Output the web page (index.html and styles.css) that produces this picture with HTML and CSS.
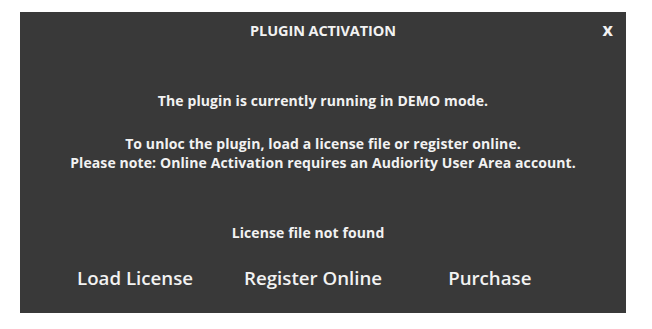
FILE: index.html
```html
<!DOCTYPE html>
<html lang="en">

<head>
    <meta charset="UTF-8">
    <meta name="viewport" content="width=device-width, initial-scale=1.0">
    <title>Plugin Activation</title>
    <link rel="stylesheet" href="styles.css">
</head>

<body>
    <div class="dialog">
        <div class="header">
            <span class="title">PLUGIN ACTIVATION</span>
            <span class="close">x</span>
        </div>
        <div class="content">
            <p class="demo">The plugin is currently running in DEMO mode.</p>
            <p class="info">To unloc the plugin, load a license file or register online.<br>
                Please note: Online Activation requires an Audiority User Area account.</p>
            <p class="status">License file not found</p>
        </div>
        <div class="actions">
            <button class="load">Load License</button>
            <button class="register">Register Online</button>
            <button class="purchase">Purchase</button>
        </div>
    </div>
</body>

</html>
```

FILE: styles.css
```css
body {
    margin: 0;
    background-color: #ffffff;
    font-family: "Open Sans", "Liberation Sans", Arial, sans-serif;
}

.dialog {
    margin: 12px 0 0 20px;
    width: 606px;
    height: 301px;
    background-color: #393939;
    color: #f2f2f2;
    display: flex;
    flex-direction: column;
}

.header {
    position: relative;
    height: 37px;
    display: flex;
    align-items: center;
    justify-content: center;
}

.title {
    font-size: 14.5px;
    font-weight: bold;
    letter-spacing: -0.1px;
}

.close {
    position: absolute;
    right: 13px;
    top: 5px;
    font-size: 18px;
    font-weight: bold;
}

.content {
    text-align: center;
    font-size: 14px;
    line-height: 19px;
    font-weight: bold;
    letter-spacing: 0.1px;
}

.content p {
    margin: 0;
}

.demo {
    padding-top: 42px;
}

.info {
    padding-top: 24px;
}

.status {
    padding-top: 51px;
    padding-right: 30px;
}

.actions {
    display: flex;
    padding: 23px 0 0 57px;
}

button {
    background: none;
    border: none;
    padding: 0;
    color: #f2f2f2;
    font-family: inherit;
    font-size: 18.7px;
    font-weight: 600;
    cursor: pointer;
}

.register {
    margin-left: 51px;
}

.purchase {
    margin-left: 66px;
}
```
